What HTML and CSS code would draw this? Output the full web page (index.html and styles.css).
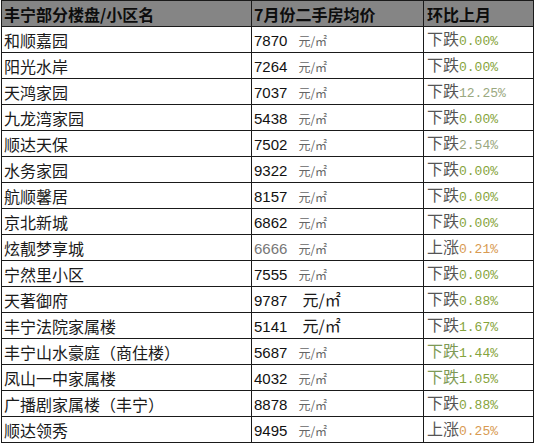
FILE: index.html
```
<!DOCTYPE html>
<html lang="zh-CN">
<head>
<meta charset="utf-8">
<title>丰宁部分楼盘</title>
<link rel="stylesheet" href="styles.css">
</head>
<body>
<table class="grid">
  <colgroup><col class="c1"><col class="c2"><col class="c3"></colgroup>
  <thead>
    <tr><th>丰宁部分楼盘/小区名</th><th>7月份二手房均价</th><th>环比上月</th></tr>
  </thead>
  <tbody>
    <tr><td>和顺嘉园</td><td><span class="num">7870</span><span class="unit">元/㎡</span></td><td><span class="dir">下跌</span><span class="pct down">0.00%</span></td></tr>
    <tr><td>阳光水岸</td><td><span class="num">7264</span><span class="unit">元/㎡</span></td><td><span class="dir">下跌</span><span class="pct down">0.00%</span></td></tr>
    <tr><td>天鸿家园</td><td><span class="num">7037</span><span class="unit">元/㎡</span></td><td><span class="dir">下跌</span><span class="pct pale">12.25%</span></td></tr>
    <tr><td>九龙湾家园</td><td><span class="num">5438</span><span class="unit">元/㎡</span></td><td><span class="dir">下跌</span><span class="pct down">0.00%</span></td></tr>
    <tr><td>顺达天保</td><td><span class="num">7502</span><span class="unit">元/㎡</span></td><td><span class="dir">下跌</span><span class="pct pale">2.54%</span></td></tr>
    <tr><td>水务家园</td><td><span class="num">9322</span><span class="unit">元/㎡</span></td><td><span class="dir">下跌</span><span class="pct down">0.00%</span></td></tr>
    <tr><td>航顺馨居</td><td><span class="num">8157</span><span class="unit">元/㎡</span></td><td><span class="dir">下跌</span><span class="pct down">0.00%</span></td></tr>
    <tr><td>京北新城</td><td><span class="num">6862</span><span class="unit">元/㎡</span></td><td><span class="dir">下跌</span><span class="pct down">0.00%</span></td></tr>
    <tr><td>炫靓梦享城</td><td><span class="num faint">6666</span><span class="unit">元/㎡</span></td><td><span class="dir">上涨</span><span class="pct up">0.21%</span></td></tr>
    <tr><td>宁然里小区</td><td><span class="num">7555</span><span class="unit">元/㎡</span></td><td><span class="dir">下跌</span><span class="pct down">0.00%</span></td></tr>
    <tr><td>天著御府</td><td><span class="num">9787</span><span class="unit big">元/㎡</span></td><td><span class="dir">下跌</span><span class="pct down">0.88%</span></td></tr>
    <tr><td>丰宁法院家属楼</td><td><span class="num">5141</span><span class="unit big">元/㎡</span></td><td><span class="dir">下跌</span><span class="pct down">1.67%</span></td></tr>
    <tr><td>丰宁山水豪庭（商住楼）</td><td><span class="num">5687</span><span class="unit">元/㎡</span></td><td><span class="dir green">下跌</span><span class="pct down">1.44%</span></td></tr>
    <tr><td>凤山一中家属楼</td><td><span class="num">4032</span><span class="unit">元/㎡</span></td><td><span class="dir green">下跌</span><span class="pct down">1.05%</span></td></tr>
    <tr><td>广播剧家属楼（丰宁）</td><td><span class="num">8878</span><span class="unit">元/㎡</span></td><td><span class="dir">下跌</span><span class="pct down">0.88%</span></td></tr>
    <tr><td>顺达领秀</td><td><span class="num">9495</span><span class="unit">元/㎡</span></td><td><span class="dir">上涨</span><span class="pct up">0.25%</span></td></tr>
  </tbody>
</table>
</body>
</html>
```

FILE: styles.css
```
html, body {
  margin: 0;
  padding: 0;
  background: #ffffff;
}

.grid {
  margin: 0 0 0 1px;
  border-collapse: collapse;
  table-layout: fixed;
  width: 532px;
  font-family: "Noto Sans CJK SC", "Noto Sans", sans-serif;
  font-size: 16px;
  color: #1a1a1a;
}

.c1 { width: 250px; }
.c2 { width: 172px; }
.c3 { width: 110px; }

.grid th,
.grid td {
  border: 1px solid #1a1a1a;
  height: 25px;
  padding: 0 0 0 2px;
  text-align: left;
  white-space: nowrap;
  overflow: hidden;
  line-height: 18px;
  vertical-align: middle;
}

.grid th {
  background: #858585;
  color: #0d0d0d;
  font-weight: bold;
  font-size: 16px;
}

.grid td:nth-child(3),
.grid th:nth-child(3) {
  padding-left: 3px;
}

.grid td span {
  line-height: 18px;
  vertical-align: baseline;
}

.num {
  font-family: "Liberation Sans", Arial, sans-serif;
  font-size: 15px;
  color: #111111;
}

.num.faint { color: #777777; }

.unit {
  margin-left: 11px;
  font-size: 12px;
  color: #666666;
}

.unit.big {
  margin-left: 15px;
  font-size: 16px;
  color: #1a1a1a;
}

.dir {
  color: #555555;
  font-size: 16px;
}

.dir.green { color: #7e9a56; }

.pct {
  font-family: "Liberation Mono", "Courier New", monospace;
  font-size: 13px;
}

.pct.down { color: #86a43c; }
.pct.pale { color: #9aa880; }
.pct.up { color: #d89a52; }
```
